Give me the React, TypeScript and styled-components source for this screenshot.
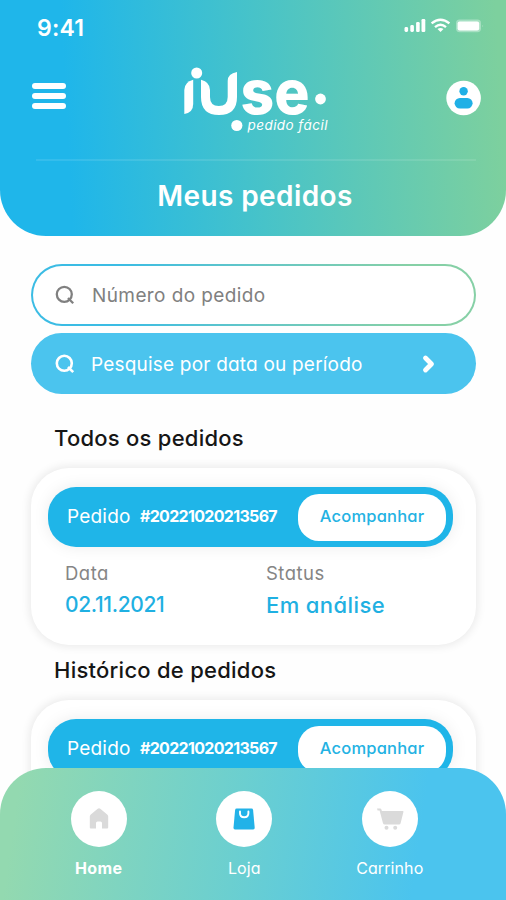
import React from 'react';
import styled, { createGlobalStyle } from 'styled-components';

const GlobalStyle = createGlobalStyle`
  * { box-sizing: border-box; }
  body { margin: 0; background: #fefefe; }
`;

const Screen = styled.div`
  position: relative;
  width: 506px;
  height: 900px;
  overflow: hidden;
  background: #fefefe;
  font-family: Inter, 'Liberation Sans', sans-serif;
  font-feature-settings: 'cv11';
`;

const Header = styled.header`
  display: flex;
  flex-direction: column;
  height: 236px;
  border-radius: 0 0 46px 46px;
  background: linear-gradient(87deg, #1fb6ea 14%, #47c3c9 51%, #7dd09e 98%);
  color: #fff;
`;

const StatusBar = styled.div`
  display: flex;
  align-items: center;
  justify-content: space-between;
  height: 56px;
  padding: 0 20px 0 37px;
`;

const Clock = styled.span`
  font-size: 23px;
  font-weight: 600;
  letter-spacing: 0.2px;
`;

const StatusIcons = styled.svg`
  display: block;
  width: 82px;
  height: 16px;
  margin-top: -5px;
`;

const TopRow = styled.div`
  display: flex;
  align-items: center;
  height: 84px;
  padding: 0 24px 0 32px;
`;

const MenuButton = styled.button`
  display: flex;
  flex-direction: column;
  gap: 4px;
  width: 34px;
  margin-top: -4px;
  padding: 0;
  border: 0;
  background: none;
`;

const MenuBar = styled.span`
  height: 6px;
  border-radius: 3px;
  background: #fff;
`;

const LogoArt = styled.svg`
  display: block;
  width: 152px;
  height: 72px;
  margin: 4px auto 0 114px;
  overflow: visible;
`;

const AvatarIcon = styled.svg`
  display: block;
  width: 36px;
  height: 36px;
`;

const Divider = styled.hr`
  width: 440px;
  height: 2px;
  margin: 19px 0 0 36px;
  border: 0;
  background: rgba(255, 255, 255, 0.1);
`;

const PageTitle = styled.h1`
  margin: 18px 0 0;
  font-size: 28px;
  font-weight: 600;
  line-height: 34px;
  letter-spacing: 0.4px;
  text-align: center;
  padding-left: 4px;
`;

const Content = styled.main`
  display: flex;
  flex-direction: column;
  padding: 28px 30px 0 31px;
`;

const SearchField = styled.div<{ $filled?: boolean }>`
  display: flex;
  align-items: center;
  height: ${p => (p.$filled ? 61 : 62)}px;
  margin-bottom: ${p => (p.$filled ? 0 : 7)}px;
  padding: ${p => (p.$filled ? '1px 39px 0 24px' : '0 39px 0 22px')};
  border: ${p => (p.$filled ? '0' : '2px solid transparent')};
  border-radius: 31px;
  background: ${p =>
    p.$filled
      ? '#4bc4ee'
      : 'linear-gradient(#fff, #fff) padding-box, linear-gradient(90deg, #3bbce4 20%, #66c7c5 52%, #86d0a6 85%) border-box'};
  color: ${p => (p.$filled ? '#fff' : '#808080')};
`;

const SearchGlyph = styled.svg`
  display: block;
  width: 20px;
  height: 20px;
`;

const SearchText = styled.span<{ $offset: number; $spacing: number }>`
  flex: 1;
  margin-left: ${p => p.$offset}px;
  font-size: 19px;
  letter-spacing: ${p => p.$spacing}px;
`;

const Chevron = styled.svg`
  display: block;
  width: 16px;
  height: 20px;
`;

const SectionTitle = styled.h2<{ $top: number }>`
  margin: ${p => p.$top}px 0 0 23px;
  font-size: 22px;
  font-weight: 500;
  line-height: 30px;
  letter-spacing: 0.25px;
  color: #161616;
`;

const Card = styled.article`
  height: 177px;
  margin-top: 15px;
  padding: 19px 23px 0 17px;
  border-radius: 38px;
  background: #fff;
  box-shadow: 0 0 9px 2px rgba(0, 0, 0, 0.08);
`;

const OrderStrip = styled.div`
  display: flex;
  align-items: center;
  height: 60px;
  padding: 0 7px 0 19px;
  border-radius: 28px;
  background: #1fb5e8;
  box-shadow: 0 0 16px rgba(0, 0, 0, 0.08);
  color: #fff;
`;

const OrderLabel = styled.span`
  width: 73px;
  margin-top: -2px;
  font-size: 19px;
  letter-spacing: 0.2px;
`;

const OrderNumber = styled.strong`
  flex: 1;
  margin-top: -2px;
  font-size: 16px;
  font-weight: 700;
  letter-spacing: -0.68px;
`;

const TrackButton = styled.button`
  width: 148px;
  height: 47px;
  padding: 0 0 2px;
  border: 0;
  border-radius: 21px;
  background: #fff;
  color: #23b2e3;
  font: 500 16.5px Inter, sans-serif;
  font-feature-settings: 'cv11';
  letter-spacing: 0.2px;
`;

const Details = styled.dl`
  display: grid;
  grid-template-columns: 201px 1fr;
  margin: 14px 0 0 17px;
`;

const DetailLabel = styled.dt`
  font-size: 18.5px;
  line-height: 24px;
  letter-spacing: 0.5px;
  color: #858585;
`;

const DetailValue = styled.dd<{ $size: number; $spacing: number }>`
  margin: 6px 0 0;
  font-size: ${p => p.$size}px;
  font-weight: 500;
  line-height: 28px;
  letter-spacing: ${p => p.$spacing}px;
  color: #1fb0e2;
`;

const BottomNav = styled.nav`
  position: absolute;
  left: 0;
  right: 0;
  bottom: 0;
  display: flex;
  height: 132px;
  padding: 23px 0 0 26px;
  border-radius: 46px 46px 0 0;
  background: linear-gradient(98deg, #93d9b0 4%, #6bcfd0 47%, #4bc4ee 82%);
`;

const NavItem = styled.a`
  display: flex;
  flex-direction: column;
  align-items: center;
  width: 145.5px;
  color: #fff;
`;

const NavCircle = styled.span`
  display: flex;
  align-items: center;
  justify-content: center;
  width: 56px;
  height: 56px;
  border-radius: 50%;
  background: #fff;
`;

const NavGlyph = styled.svg`
  display: block;
  width: 28px;
  height: 28px;
`;

const NavLabel = styled.span<{ $active?: boolean }>`
  margin-top: 10px;
  font-size: 16px;
  font-weight: ${p => (p.$active ? 700 : 400)};
  line-height: 22px;
  letter-spacing: ${p => (p.$active ? 0.4 : 0.1)}px;
`;

function SignalWifiBattery() {
  return (
    <StatusIcons viewBox="0 0 82 16" fill="#fff">
      <rect x="0.5" y="9" width="3.6" height="5" rx="1.4" />
      <rect x="6.3" y="7" width="3.6" height="7" rx="1.4" />
      <rect x="12.1" y="4" width="3.6" height="10" rx="1.2" />
      <rect x="17.5" y="1" width="3.8" height="13" rx="1.2" />
      <g fill="none" stroke="#fff" strokeWidth="2.4">
        <path d="M27.6 5.4 Q36.5 -1.7 45.4 5.4" />
        <path d="M31 9.1 Q36.5 4.4 42 9.1" />
      </g>
      <path d="M33.5 11 Q36.5 8.8 39.5 11 L36.5 14 Z" />
      <rect x="52" y="1.6" width="25" height="12.6" rx="3.6" opacity="0.35" />
      <rect x="53.6" y="3.6" width="21.6" height="8.8" rx="2" />
      <path d="M78.5 6.8 Q80 8 78.5 9.2 Z" opacity="0.4" />
    </StatusIcons>
  );
}

function Logo() {
  return (
    <LogoArt viewBox="180 64 152 72" fill="#fff">
      <circle cx="196.7" cy="73" r="5.5" />
      <path d="M184.3 114 V90 Q184.3 82 193.2 79.7 V104 Q193.2 112.5 184.3 114 Z" />
      <path d="M201 79.7 Q210 82 210 90 V97 Q210 106 218.8 106 Q227.7 106 227.7 97 V81 Q227.7 73.5 237 72 V97 Q237 115 219 115 Q201 115 201 97 Z" />
      <text x="240.5" y="114" fontSize="62" fontWeight="800" textLength="69" lengthAdjust="spacingAndGlyphs">se</text>
      <circle cx="320.5" cy="99" r="5.4" />
      <circle cx="236.8" cy="125.5" r="5.6" />
      <text x="247.5" y="129.5" fontSize="13.5" fontStyle="italic" textLength="80" lengthAdjust="spacing">pedido fácil</text>
    </LogoArt>
  );
}

function Avatar() {
  return (
    <AvatarIcon viewBox="0 0 36 36">
      <circle cx="17.6" cy="18" r="17.3" fill="#fff" />
      <circle cx="17.6" cy="11.3" r="4.2" fill="#1fb0e6" />
      <rect x="8.6" y="18" width="18" height="10.5" rx="5.25" fill="#1fb0e6" />
    </AvatarIcon>
  );
}

function SearchIcon({ weight }: { weight: number }) {
  return (
    <SearchGlyph viewBox="0 0 20 20" fill="none" stroke="currentColor" strokeWidth={weight}>
      <circle cx="9.3" cy="9.3" r="7.5" />
      <path d="M13 13 L18.2 18.2" />
    </SearchGlyph>
  );
}

function HomeIcon() {
  return (
    <NavGlyph viewBox="0 0 28 28" fill="#dadada">
      <path d="M12.7 3.8 Q14 2.7 15.3 3.8 L22.2 9.4 Q23.2 10.2 23.2 11.4 V22.5 Q23.2 23.5 22.2 23.5 H17 V18 Q17 16.5 15.5 16.5 H12.5 Q11 16.5 11 18 V23.5 H5.8 Q4.8 23.5 4.8 22.5 V11.4 Q4.8 10.2 5.8 9.4 Z" />
    </NavGlyph>
  );
}

function BagIcon() {
  return (
    <NavGlyph viewBox="0 0 28 28">
      <path d="M6.7 3.5 H21.5 Q22.9 3.5 23.1 4.9 L24.7 22.8 Q24.8 24.5 23.2 24.5 H5 Q3.4 24.5 3.5 22.8 L5.1 4.9 Q5.3 3.5 6.7 3.5 Z" fill="#22b2e8" />
      <path d="M10 6.5 V8.3 Q10 12.3 14.2 12.3 Q18.4 12.3 18.4 8.3 V6.5" fill="none" stroke="#fff" strokeWidth="1.9" strokeLinecap="round" />
    </NavGlyph>
  );
}

function CartIcon() {
  return (
    <NavGlyph viewBox="0 0 28 28" fill="#dadada">
      <path d="M1 3.5 H4.2 Q5 3.5 5.3 4.3 L5.9 6 H26.8 Q27.7 6 27.4 7 L24.6 18.3 Q24.3 19.5 23 19.5 H8.7 Q7.4 19.5 7 18.3 L3.6 5.4 H1.6 Z" />
      <circle cx="10.5" cy="22.8" r="2" />
      <circle cx="19.2" cy="22.8" r="2" />
    </NavGlyph>
  );
}

function OrderCard() {
  return (
    <Card>
      <OrderStrip>
        <OrderLabel>Pedido</OrderLabel>
        <OrderNumber>#20221020213567</OrderNumber>
        <TrackButton>Acompanhar</TrackButton>
      </OrderStrip>
      <Details>
        <DetailLabel>Data</DetailLabel>
        <DetailLabel>Status</DetailLabel>
        <DetailValue $size={21} $spacing={-0.35}>02.11.2021</DetailValue>
        <DetailValue $size={22} $spacing={0.4}>Em análise</DetailValue>
      </Details>
    </Card>
  );
}

export default function App() {
  return (
    <Screen>
      <GlobalStyle />
      <Header>
        <StatusBar>
          <Clock>9:41</Clock>
          <SignalWifiBattery />
        </StatusBar>
        <TopRow>
          <MenuButton aria-label="Menu">
            <MenuBar />
            <MenuBar />
            <MenuBar />
          </MenuButton>
          <Logo />
          <Avatar />
        </TopRow>
        <Divider />
        <PageTitle>Meus pedidos</PageTitle>
      </Header>
      <Content>
        <SearchField>
          <SearchIcon weight={2.3} />
          <SearchText $offset={17} $spacing={0.4}>Número do pedido</SearchText>
        </SearchField>
        <SearchField $filled>
          <SearchIcon weight={2.6} />
          <SearchText $offset={16} $spacing={0.2}>Pesquise por data ou período</SearchText>
          <Chevron viewBox="0 0 16 20" fill="none" stroke="#fff" strokeWidth="4.8" strokeLinecap="round" strokeLinejoin="round">
            <path d="M4.5 4 L10.5 10 L4.5 16" />
          </Chevron>
        </SearchField>
        <SectionTitle $top={29}>Todos os pedidos</SectionTitle>
        <OrderCard />
        <SectionTitle $top={10}>Histórico de pedidos</SectionTitle>
        <OrderCard />
      </Content>
      <BottomNav>
        <NavItem>
          <NavCircle><HomeIcon /></NavCircle>
          <NavLabel $active>Home</NavLabel>
        </NavItem>
        <NavItem>
          <NavCircle><BagIcon /></NavCircle>
          <NavLabel>Loja</NavLabel>
        </NavItem>
        <NavItem>
          <NavCircle><CartIcon /></NavCircle>
          <NavLabel>Carrinho</NavLabel>
        </NavItem>
      </BottomNav>
    </Screen>
  );
}
